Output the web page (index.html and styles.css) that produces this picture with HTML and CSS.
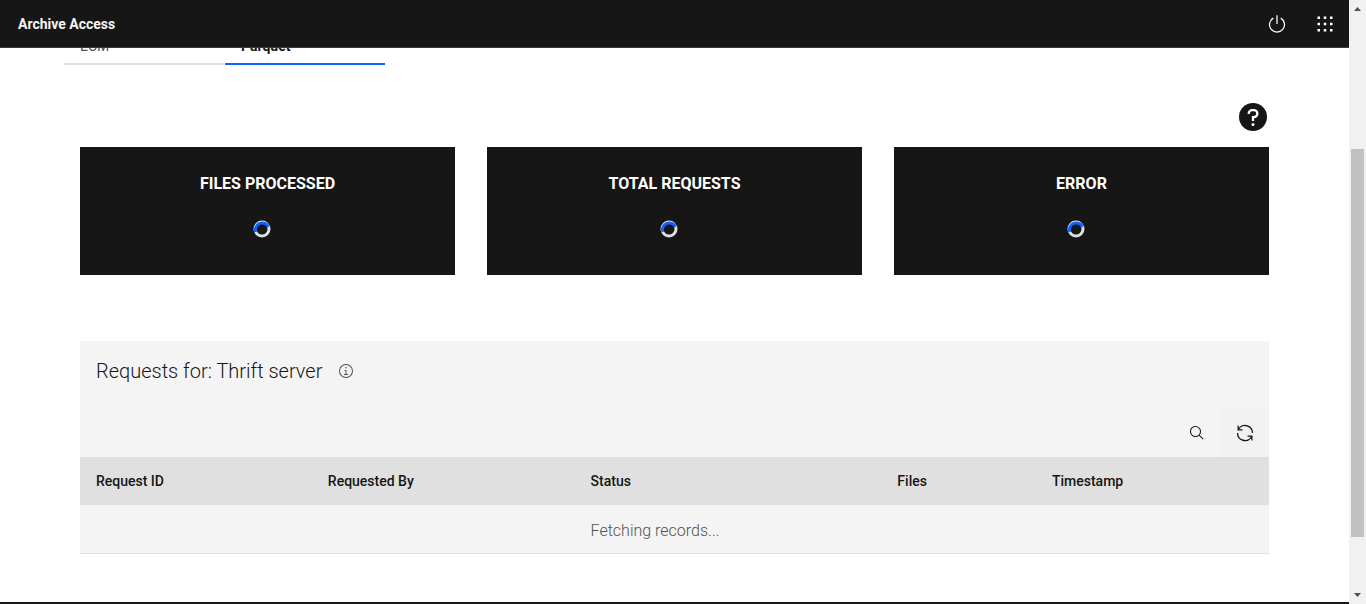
FILE: index.html
```html
<!DOCTYPE html>
<html lang="en">
<head>
<meta charset="utf-8">
<title>Archive Access</title>
<meta name="viewport" content="width=device-width, initial-scale=1">
<link rel="stylesheet" href="styles.css">
</head>
<body>
<div class="app">
  <header class="header">
    <a class="brand" href="#">Archive Access</a>
    <button class="header-action" aria-label="Log out">
      <svg width="20" height="20" viewBox="0 0 32 32" fill="currentColor"><path d="M22.5 5.74l-1 1.73a11 11 0 1 1-11 0l-1-1.73a13 13 0 1 0 13 0Z"/><path d="M15 2h2v14h-2z"/></svg>
    </button>
    <button class="header-action" aria-label="App switcher">
      <svg width="20" height="20" viewBox="0 0 32 32" fill="currentColor"><path d="M14 4h4v4h-4zM4 4h4v4H4zM24 4h4v4h-4zM14 14h4v4h-4zM4 14h4v4H4zM24 14h4v4h-4zM14 24h4v4h-4zM4 24h4v4H4zM24 24h4v4h-4z"/></svg>
    </button>
  </header>

  <main class="main">
    <div class="tabs" role="tablist">
      <button class="tab" role="tab" aria-selected="false">ECM</button>
      <button class="tab tab-selected" role="tab" aria-selected="true">Parquet</button>
    </div>

    <div class="content">
      <div class="help-row">
        <button class="help" aria-label="Help">
          <svg width="32" height="32" viewBox="0 0 32 32"><circle cx="16" cy="16" r="14" fill="#161616"/><path d="M11.700 13v-.5a3.600 3.600 0 0 1 3.600-3.500h1.500a3.600 3.600 0 0 1 0 7.200H16V20" fill="none" stroke="#fff" stroke-width="2.25"/><circle cx="16" cy="23.500" r="1.500" fill="#fff"/></svg>
        </button>
      </div>

      <section class="tiles">
        <div class="tile"><h2 class="tile-title">FILES PROCESSED</h2>
          <svg class="spinner" role="img" aria-label="Loading" viewBox="0 0 18 18"><circle class="spinner-track" cx="9" cy="9" r="7"/><path class="spinner-arc" d="M2.700 12A7 7 0 0 1 15.600 6.700"/></svg></div>
        <div class="tile"><h2 class="tile-title">TOTAL REQUESTS</h2>
          <svg class="spinner" role="img" aria-label="Loading" viewBox="0 0 18 18"><circle class="spinner-track" cx="9" cy="9" r="7"/><path class="spinner-arc" d="M2.700 12A7 7 0 0 1 15.600 6.700"/></svg></div>
        <div class="tile"><h2 class="tile-title">ERROR</h2>
          <svg class="spinner" role="img" aria-label="Loading" viewBox="0 0 18 18"><circle class="spinner-track" cx="9" cy="9" r="7"/><path class="spinner-arc" d="M2.700 12A7 7 0 0 1 15.600 6.700"/></svg></div>
      </section>

      <section class="panel">
        <div class="panel-header">
          <h1 class="panel-title" id="requests-title">Requests for: Thrift server</h1>
          <button class="info" aria-label="More information">
            <svg width="16" height="16" viewBox="0 0 32 32" fill="currentColor"><path d="M17 22v-8h-4v2h2v6h-3v2h8v-2zM16 8a1.500 1.500 0 1 0 1.500 1.500A1.500 1.500 0 0 0 16 8z"/><path d="M16 30a14 14 0 1 1 14-14 14 14 0 0 1-14 14zm0-26a12 12 0 1 0 12 12A12 12 0 0 0 16 4z"/></svg>
          </button>
        </div>
        <div class="toolbar">
          <button class="tool" aria-label="Search">
            <svg width="16" height="16" viewBox="0 0 32 32" fill="currentColor"><path d="M29 27.590l-7.550-7.560a11 11 0 1 0-1.420 1.420L27.590 29zM4 13a9 9 0 1 1 9 9 9 9 0 0 1-9-9z"/></svg>
          </button>
          <button class="tool tool-refresh" aria-label="Refresh">
            <svg width="20" height="20" viewBox="0 0 32 32" fill="currentColor"><path d="M12 10H6.780A11 11 0 0 1 27 16h2A13 13 0 0 0 6 7.680V4H4v8h8zM20 22h5.220A11 11 0 0 1 5 16H3a13 13 0 0 0 23 8.320V28h2v-8h-8z"/></svg>
          </button>
        </div>
        <table class="table" aria-labelledby="requests-title">
          <colgroup><col class="col-id"><col class="col-by"><col class="col-status"><col class="col-files"><col></colgroup>
          <thead><tr><th scope="col">Request ID</th><th scope="col">Requested By</th><th scope="col">Status</th><th scope="col">Files</th><th scope="col">Timestamp</th></tr></thead>
          <tbody><tr><td></td><td></td><td>Fetching records...</td><td></td><td></td></tr></tbody>
        </table>
      </section>
    </div>
  </main>
  <footer class="footer"></footer>
</div>

<div class="scrollbar" aria-hidden="true">
  <svg width="17" height="17" viewBox="0 0 17 17"><path d="M5 11l3.500-4L12 11z" fill="#505050"/></svg>
  <div class="scroll-track"><div class="scroll-thumb"></div></div>
  <svg width="17" height="17" viewBox="0 0 17 17"><path d="M5 6l3.500 4L12 6z" fill="#505050"/></svg>
</div>
</body>
</html>
```
FILE: styles.css
```css
* { box-sizing: border-box; }

body {
  display: flex;
  height: 100vh;
  margin: 0;
  overflow: hidden;
  background: #fff;
  color: #161616;
  font: 14px/18px Roboto, "Liberation Sans", sans-serif;
}

button {
  padding: 0;
  border: 0;
  background: none;
  color: inherit;
  font: inherit;
}

svg { display: block; }

.app {
  position: relative;
  display: flex;
  flex: 1;
  flex-direction: column;
  min-width: 0;
}

.header {
  position: absolute;
  inset: 0 0 auto;
  z-index: 1;
  display: flex;
  align-items: center;
  height: 48px;
  border-bottom: 1px solid #393939;
  background: #161616;
  color: #fff;
}

.brand {
  margin-right: auto;
  padding-left: 18px;
  color: #f4f4f4;
  font-weight: 700;
  text-decoration: none;
}

.header-action {
  display: grid;
  place-items: center;
  width: 48px;
  height: 48px;
}

.main {
  flex: 1;
  padding: 25px 64px 0;
}

.tabs { display: flex; gap: 1px; }

.tab {
  width: 160px;
  height: 40px;
  padding: 4px 16px 0;
  border-bottom: 2px solid #e0e0e0;
  color: #525252;
  text-align: left;
}

.tab-selected {
  border-color: #0f62fe;
  color: #161616;
  font-weight: 700;
}

.content { padding: 36px 16px 0; }

.help-row {
  display: flex;
  justify-content: flex-end;
  margin-bottom: 14px;
}

.tiles {
  display: grid;
  grid-template-columns: repeat(3, 1fr);
  gap: 32px;
  margin-bottom: 66px;
}

.tile {
  display: flex;
  flex-direction: column;
  align-items: center;
  gap: 26px;
  height: 128px;
  padding-top: 27px;
  background: #161616;
  color: #fff;
}

.tile-title {
  margin: 0;
  font-size: 16px;
  font-weight: 700;
  line-height: 20px;
}

.spinner {
  width: 18px;
  height: 18px;
  margin-right: 12px;
  fill: none;
  stroke-width: 3;
}

.spinner-track { stroke: #e0e0e0; }
.spinner-arc { stroke: #0f62fe; }

.panel { background: #f4f4f4; }

.panel-header {
  display: flex;
  align-items: center;
  gap: 16px;
  padding: 16px 16px 24px;
}

.panel-title {
  margin: 0;
  font-size: 20px;
  font-weight: 300;
  line-height: 28px;
}

.info { color: #525252; }

.toolbar { display: flex; justify-content: flex-end; }

.tool {
  display: grid;
  place-items: center;
  width: 48px;
  height: 48px;
}

.tool-refresh { background: #f2f2f2; }

.table {
  width: 100%;
  border-collapse: separate;
  border-spacing: 0;
  table-layout: fixed;
}

.col-id { width: 19.5%; }
.col-by { width: 22.1%; }
.col-status { width: 25.8%; }
.col-files { width: 13%; }

.table th, .table td {
  height: 48px;
  padding: 0 16px;
  text-align: left;
  white-space: nowrap;
}

.table th {
  background: #e0e0e0;
  font-weight: 500;
}

.table td {
  height: 49px;
  padding-top: 4px;
  border-bottom: 1px solid #e0e0e0;
  color: #525252;
  font-size: 16px;
  font-weight: 300;
}

.footer { height: 2px; background: #161616; }

.scrollbar {
  display: flex;
  flex-direction: column;
  width: 17px;
  background: #f1f1f1;
}

.scroll-track {
  flex: 1;
  padding: 0 2px;
}

.scroll-thumb {
  height: 68%;
  margin-top: 132px;
  background: #c1c1c1;
}
```
